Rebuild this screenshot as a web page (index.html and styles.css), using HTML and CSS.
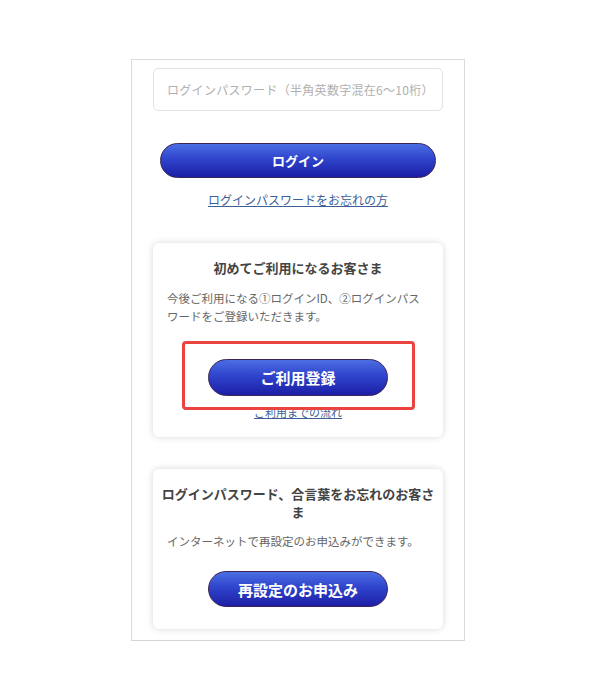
FILE: index.html
```html
<!DOCTYPE html>
<html lang="ja">
<head>
<meta charset="utf-8">
<link rel="stylesheet" href="styles.css">
</head>
<body>
<div class="frame">
  <div class="input">ログインパスワード（半角英数字混在6〜10桁）</div>
  <div class="btn btn-login">ログイン</div>
  <div class="link-row"><a class="link">ログインパスワードをお忘れの方</a></div>

  <div class="card card-first">
    <div class="card-title">初めてご利用になるお客さま</div>
    <p class="card-text">今後ご利用になる①ログインID、②ログインパスワードをご登録いただきます。</p>
    <div class="highlight-wrap">
      <div class="btn btn-card">ご利用登録</div>
      <div class="link-row small"><a class="link">ご利用までの流れ</a></div>
      <div class="highlight"></div>
    </div>
  </div>

  <div class="card card-reset">
    <div class="card-title">ログインパスワード、合言葉をお忘れのお客さま</div>
    <p class="card-text">インターネットで再設定のお申込みができます。</p>
    <div class="btn btn-card">再設定のお申込み</div>
  </div>
</div>
</body>
</html>
```
FILE: styles.css
```css
* { box-sizing: border-box; }
html, body { margin: 0; padding: 0; background: #fff; }
body {
  font-family: "Noto Sans CJK JP", "Noto Sans", sans-serif;
  color: #444;
  padding-top: 59px;
}
.frame {
  width: 334px;
  height: 582px;
  margin-left: 131px;
  border: 1px solid #dcdcdc;
  border-bottom-color: #d4d4d4;
  padding: 8px 21px 0;
  display: flex;
  flex-direction: column;
}
.input {
  height: 43px;
  border: 1px solid #e2e2e2;
  border-radius: 5px;
  padding: 0 13px;
  display: flex;
  align-items: center;
  font-size: 12px;
  color: #b0b0b0;
  letter-spacing: 0.3px;
}
.btn {
  display: flex;
  align-items: center;
  justify-content: center;
  color: #fff;
  font-weight: 700;
  border: 1px solid #3b2456;
  border-radius: 999px;
  background: linear-gradient(to bottom, #4b6ee3 0%, #2f44cc 45%, #1c1fa6 100%);
}
.btn-login {
  margin: 32px 7px 0;
  height: 35px;
  font-size: 13px;
}
.link-row {
  text-align: center;
  margin-top: 13px;
  font-size: 12px;
  line-height: 18px;
}
.link {
  color: #3d5f96;
  text-decoration: underline;
}
.card {
  margin-top: 34px;
  border-radius: 6px;
  background: #fff;
  box-shadow: 0 0 7px rgba(0, 0, 0, 0.16);
  padding: 16px 8px 0;
  display: flex;
  flex-direction: column;
}
.card-first { height: 194px; }
.card-reset { margin-top: 32px; height: 160px; }
.card-title {
  text-align: center;
  font-size: 13px;
  font-weight: 700;
  line-height: 18px;
  color: #444;
}
.card-text {
  margin: 12px 0 0;
  padding: 0 6px;
  font-size: 11.5px;
  line-height: 18px;
  color: #666;
}
.card-reset .card-text { margin-top: 11px; }
.btn-card {
  width: 180px;
  height: 37px;
  align-self: center;
  font-size: 15px;
}
.highlight-wrap {
  position: relative;
  margin-top: 34px;
  display: flex;
  flex-direction: column;
}
.highlight-wrap .link-row.small {
  margin-top: 8px;
  font-size: 11px;
  line-height: 16px;
}
.highlight {
  position: absolute;
  left: 21px;
  top: -18px;
  width: 233px;
  height: 69px;
  border: 3px solid #ea4340;
  border-radius: 4px;
  pointer-events: none;
}
.card-reset .btn-card { margin-top: 21px; height: 36px; }
```
